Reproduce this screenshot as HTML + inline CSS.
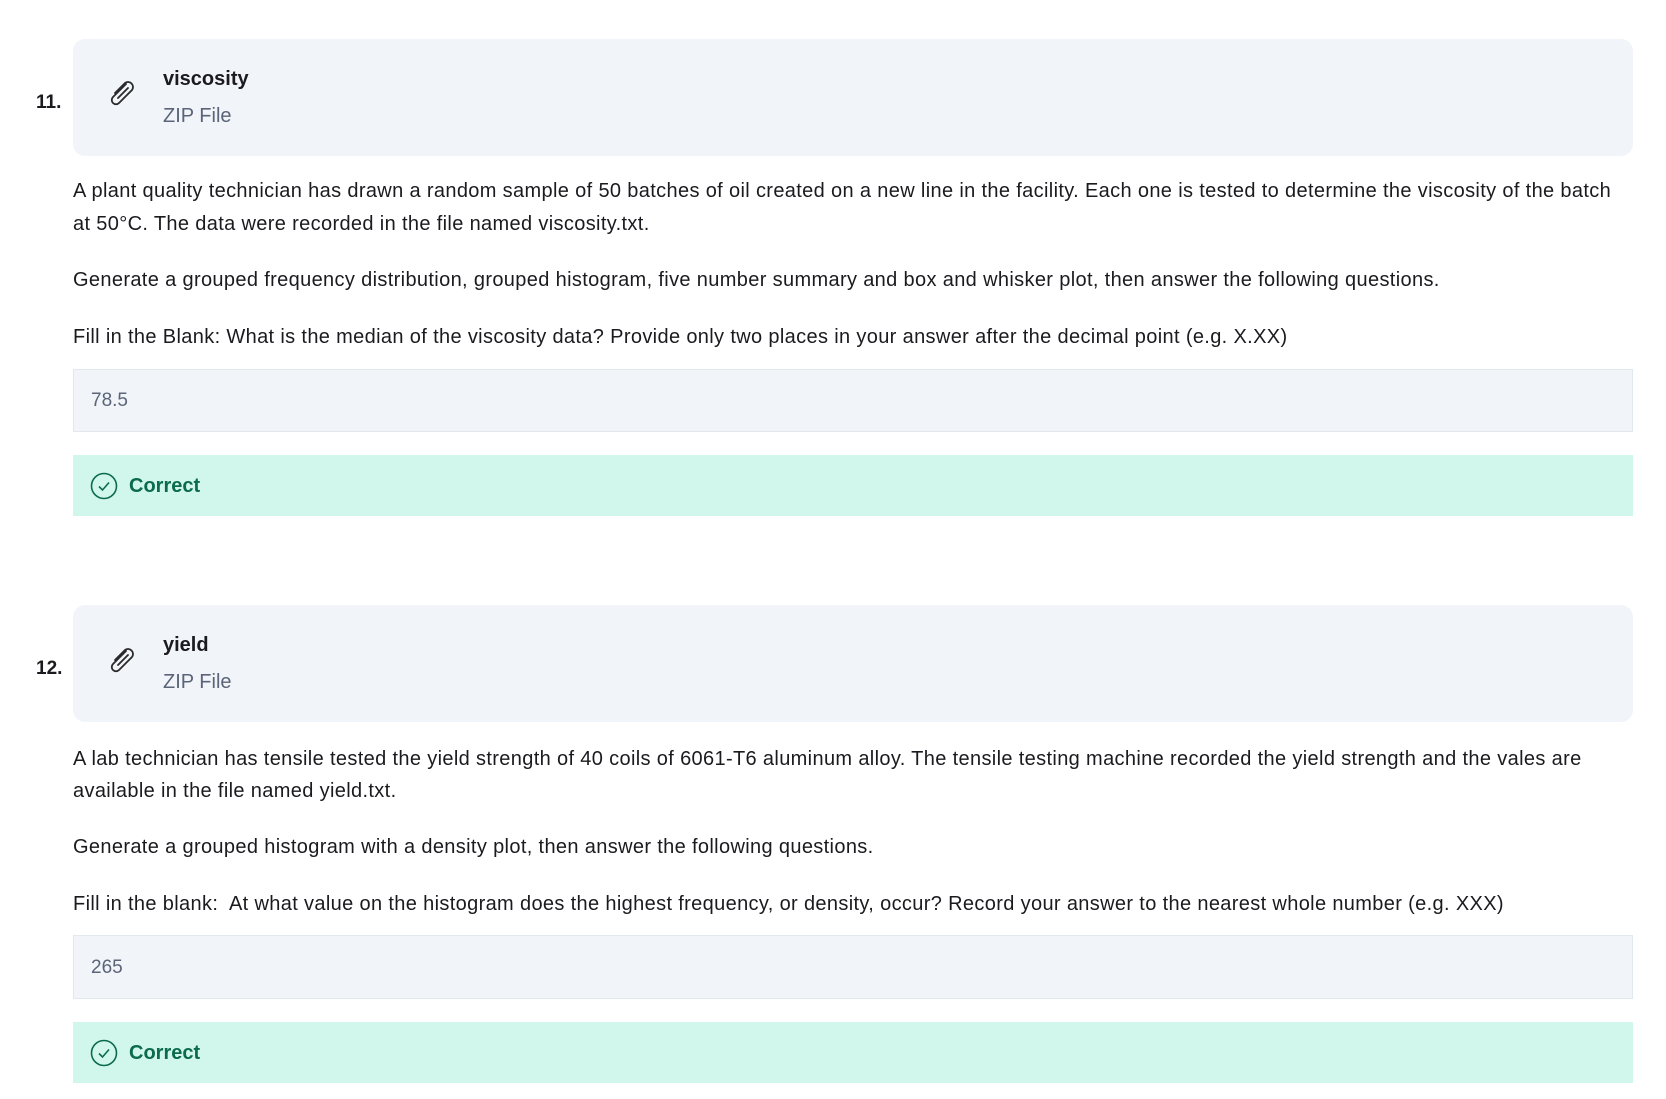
<!DOCTYPE html>
<html><head><meta charset="utf-8"><style>
body{margin:0;width:1666px;height:1099px;background:#fff;font-family:"Liberation Sans",sans-serif;color:#1b1b1f;position:relative;overflow:hidden}
.a{position:absolute;white-space:nowrap;line-height:24px;font-size:20px;letter-spacing:0.35px}
.card{position:absolute;left:73px;width:1560px;background:#f1f4f9;border-radius:12px}
.num{font-weight:bold;font-size:19px;letter-spacing:0}
.t{font-weight:bold;font-size:20px;letter-spacing:0}
.z{color:#5b6478;font-size:20px;letter-spacing:0}
.inp{position:absolute;left:73px;width:1558px;background:#f1f4f9;border:1px solid #e3e8ef}
.ok{position:absolute;left:73px;width:1560px;background:#d1f7ec;height:61px}
.ok span{position:absolute;left:56px;top:19px;font-weight:bold;font-size:20px;color:#0b6b4c;line-height:24px}
.ok svg{position:absolute;left:17px;top:17px}
</style></head><body>

<div class="card" style="top:39px;height:117px"></div>
<div class="a num" style="left:36px;top:91px">11.</div>
<svg style="position:absolute;left:106px;top:76px" width="32" height="33" viewBox="0 0 32 33"><path d="M20 8 L7 21 a4 4 0 0 0 6 6 L26 14 a5 5 0 0 0 -7 -7 L9 17 M22 12 L12 22" fill="none" stroke="#2a2a2a" stroke-width="1.8" stroke-linecap="round"/></svg>
<div class="a t" style="left:163px;top:67px">viscosity</div>
<div class="a z" style="left:163px;top:104px">ZIP File</div>
<div class="a" style="left:73px;top:179px">A plant quality technician has drawn a random sample of 50 batches of oil created on a new line in the facility. Each one is tested to determine the viscosity of the batch</div>
<div class="a" style="left:73px;top:212px">at 50°C. The data were recorded in the file named viscosity.txt.</div>
<div class="a" style="left:73px;top:268px">Generate a grouped frequency distribution, grouped histogram, five number summary and box and whisker plot, then answer the following questions.</div>
<div class="a" style="left:73px;top:325px">Fill in the Blank: What is the median of the viscosity data? Provide only two places in your answer after the decimal point (e.g. X.XX)</div>
<div class="inp" style="top:369px;height:61px"></div>
<div class="a z" style="left:91px;top:389px;font-size:19px">78.5</div>
<div class="ok" style="top:455px"><svg width="28" height="28" viewBox="0 0 28 28"><circle cx="14" cy="14" r="12.5" fill="none" stroke="#0b6b4c" stroke-width="1.6"/><path d="M9 14.5 L12.5 18 L19 10.5" fill="none" stroke="#0b6b4c" stroke-width="1.6"/></svg><span>Correct</span></div>

<div class="card" style="top:605px;height:117px"></div>
<div class="a num" style="left:36px;top:657px">12.</div>
<svg style="position:absolute;left:106px;top:643px" width="32" height="33" viewBox="0 0 32 33"><path d="M20 8 L7 21 a4 4 0 0 0 6 6 L26 14 a5 5 0 0 0 -7 -7 L9 17 M22 12 L12 22" fill="none" stroke="#2a2a2a" stroke-width="1.8" stroke-linecap="round"/></svg>
<div class="a t" style="left:163px;top:633px">yield</div>
<div class="a z" style="left:163px;top:670px">ZIP File</div>
<div class="a" style="left:73px;top:747px">A lab technician has tensile tested the yield strength of 40 coils of 6061-T6 aluminum alloy. The tensile testing machine recorded the yield strength and the vales are</div>
<div class="a" style="left:73px;top:779px">available in the file named yield.txt.</div>
<div class="a" style="left:73px;top:835px">Generate a grouped histogram with a density plot, then answer the following questions.</div>
<div class="a" style="left:73px;top:892px">Fill in the blank:&nbsp; At what value on the histogram does the highest frequency, or density, occur? Record your answer to the nearest whole number (e.g. XXX)</div>
<div class="inp" style="top:935px;height:62px"></div>
<div class="a z" style="left:91px;top:956px;font-size:19px">265</div>
<div class="ok" style="top:1022px"><svg width="28" height="28" viewBox="0 0 28 28"><circle cx="14" cy="14" r="12.5" fill="none" stroke="#0b6b4c" stroke-width="1.6"/><path d="M9 14.5 L12.5 18 L19 10.5" fill="none" stroke="#0b6b4c" stroke-width="1.6"/></svg><span>Correct</span></div>
</body></html>
